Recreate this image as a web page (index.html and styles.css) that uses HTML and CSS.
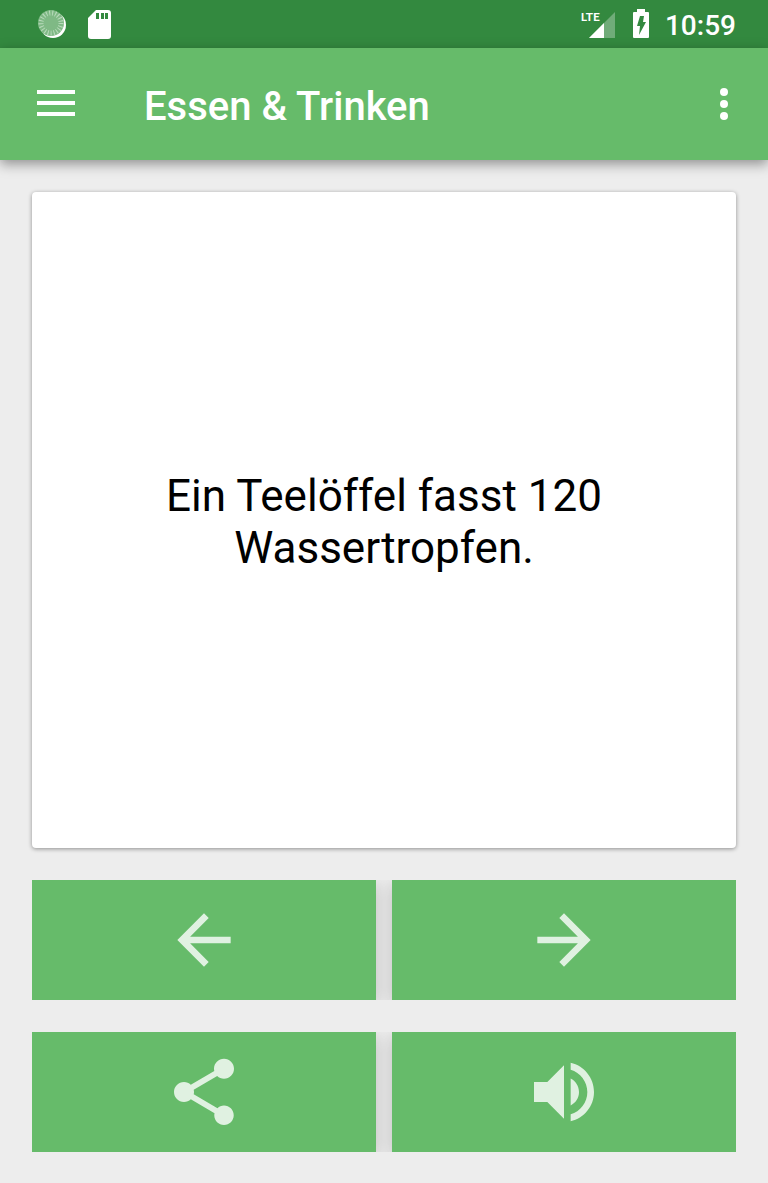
FILE: index.html
```html
<!DOCTYPE html>
<html lang="de">
<head>
    <meta charset="UTF-8">
    <meta name="viewport" content="width=device-width, initial-scale=1.0">
    <title>Essen &amp; Trinken</title>
    <link rel="stylesheet" href="styles.css">
</head>
<body>

<div class="status-bar">
    <div class="status-left">
        <svg width="28" height="28" viewBox="0 0 28 28" aria-hidden="true">
            <circle cx="15" cy="15" r="13" fill="#fff"/>
            <circle cx="13" cy="13" r="13" fill="#7fb985"/>
            <circle cx="13" cy="13" r="10" fill="none" stroke="#b9dabc" stroke-width="5" stroke-dasharray="1 2"/>
        </svg>
        <svg width="24" height="30" viewBox="0 0 24 30" aria-hidden="true">
            <path fill="#fff" d="M9 1h12q3 0 3 3v23q0 3-3 3H4q-3 0-3-3V9z"/>
            <path fill="#33893f" d="M9 4h3v6H9zM14 4h3v6h-3zM18 4h3v6h-3z"/>
        </svg>
    </div>
    <div class="status-right">
        <div class="signal">
            <span class="network">LTE</span>
            <svg width="26" height="26" viewBox="0 0 26 26" aria-hidden="true">
                <path fill="#fff" fill-opacity=".3" d="M0 26 26 0v26z"/>
                <path fill="#fff" d="M0 26 15 11v15z"/>
            </svg>
        </div>
        <svg width="16" height="30" viewBox="0 0 16 30" aria-hidden="true">
            <path fill="#fff" d="M4 0h8v3h3q1 0 1 1v24q0 1-1 1H1q-1 0-1-1V4q0-1 1-1h3z"/>
            <path fill="#33893f" d="M7 7h4l-1 6h3L6 26l1-9H4z"/>
        </svg>
        <span class="clock">10:59</span>
    </div>
</div>

<header class="app-bar">
    <button class="icon-button" aria-label="Menü">
        <svg width="38" height="28" viewBox="0 0 38 28">
            <path fill="#fff" d="M0 0h38v4H0zM0 11h38v4H0zM0 22h38v4H0z"/>
        </svg>
    </button>
    <h1>Essen &amp; Trinken</h1>
    <button class="icon-button" aria-label="Weitere Optionen">
        <svg width="8" height="32" viewBox="0 0 8 32">
            <circle cx="4" cy="4" r="4" fill="#fff"/>
            <circle cx="4" cy="16" r="4" fill="#fff"/>
            <circle cx="4" cy="28" r="4" fill="#fff"/>
        </svg>
    </button>
</header>

<main class="content">
    <div class="card">
        <p>Ein Teelöffel fasst 120 Wassertropfen.</p>
    </div>
    <div class="button-row">
        <button class="action" aria-label="Zurück">
            <svg viewBox="0 0 24 24"><path d="M20 11H7.83l5.59-5.59L12 4l-8 8 8 8 1.41-1.41L7.83 13H20v-2z"/></svg>
        </button>
        <button class="action" aria-label="Weiter">
            <svg viewBox="0 0 24 24"><path d="M12 4l-1.41 1.41L16.17 11H4v2h12.17l-5.58 5.59L12 20l8-8z"/></svg>
        </button>
    </div>
    <div class="button-row">
        <button class="action" aria-label="Teilen">
            <svg viewBox="0 0 24 24"><path d="M18 16.08c-.76 0-1.44.3-1.96.77L8.91 12.7c.05-.23.09-.46.09-.7s-.04-.47-.09-.7l7.05-4.11c.54.5 1.25.81 2.04.81 1.66 0 3-1.34 3-3s-1.34-3-3-3-3 1.34-3 3c0 .24.04.47.09.7L8.04 9.81C7.5 9.31 6.79 9 6 9c-1.66 0-3 1.34-3 3s1.34 3 3 3c.79 0 1.5-.31 2.04-.81l7.12 4.16c-.05.21-.08.43-.08.65 0 1.61 1.31 2.92 2.92 2.92s2.92-1.31 2.92-2.92-1.31-2.92-2.92-2.92z"/></svg>
        </button>
        <button class="action" aria-label="Vorlesen">
            <svg viewBox="0 0 24 24"><path d="M3 9v6h4l5 5V4L7 9H3zm13.5 3c0-1.77-1.02-3.29-2.5-4.03v8.05c1.48-.73 2.5-2.25 2.5-4.02zM14 3.23v2.06c2.89.86 5 3.54 5 6.71s-2.11 5.85-5 6.71v2.06c4.01-.91 7-4.49 7-8.77s-2.99-7.86-7-8.77z"/></svg>
        </button>
    </div>
</main>

</body>
</html>
```
FILE: styles.css
```css
* {
    box-sizing: border-box;
}
body {
    font-family: Roboto, Arial, sans-serif;
    margin: 0;
    min-height: 100vh;
    display: flex;
    flex-direction: column;
    background-color: #ededed;
    color: #000;
}
button {
    border: none;
    cursor: pointer;
}
svg {
    display: block;
}
.status-bar {
    height: 48px;
    padding: 0 32px 0 38px;
    display: flex;
    justify-content: space-between;
    align-items: center;
    background-color: #33893f;
    color: #fff;
}
.status-left, .status-right {
    display: flex;
    align-items: center;
}
.status-left {
    gap: 21px;
}
.status-right {
    gap: 16px;
}
.signal {
    display: flex;
    height: 28px;
    padding-right: 2px;
    align-items: flex-end;
}
/* The network label overlaps the signal triangle */
.network {
    align-self: flex-start;
    margin-right: -11px;
    font-family: Lato, sans-serif;
    font-size: 12px;
    font-weight: bold;
    line-height: 14px;
}
.clock {
    padding-top: 4px;
    font-size: 28px;
    font-weight: 500;
    line-height: 32px;
}
.app-bar {
    height: 112px;
    padding: 0 24px 0 21px;
    display: flex;
    align-items: center;
    background-color: #66bb6a;
    box-shadow: 0 4px 12px rgba(0, 0, 0, 0.4);
}
.icon-button {
    padding: 16px;
    background: none;
}
h1 {
    flex: 1;
    margin: 0 0 0 53px;
    padding-top: 6px;
    font-size: 40px;
    font-weight: 500;
    line-height: 48px;
    color: #fff;
}
.content {
    flex: 1;
    padding: 32px 32px 31px;
    display: flex;
    flex-direction: column;
    gap: 32px;
}
.card {
    flex: 1;
    padding: 32px;
    display: flex;
    align-items: center;
    justify-content: center;
    background-color: #fff;
    border-radius: 4px;
    box-shadow: 0 1px 4px rgba(0, 0, 0, 0.4);
}
.card p {
    margin: 0;
    padding-top: 4px;
    max-width: 480px;
    font-size: 44px;
    line-height: 52px;
    text-align: center;
}
.button-row {
    display: flex;
    gap: 16px;
    overflow: hidden;
}
.action {
    flex: 1;
    height: 120px;
    padding: 0;
    display: flex;
    align-items: center;
    justify-content: center;
    background-color: #66bb6a;
    box-shadow: 0 4px 16px rgba(0, 0, 0, 0.2);
}
.action svg {
    width: 80px;
    height: 80px;
    fill: #e0f1e1;
}
```
